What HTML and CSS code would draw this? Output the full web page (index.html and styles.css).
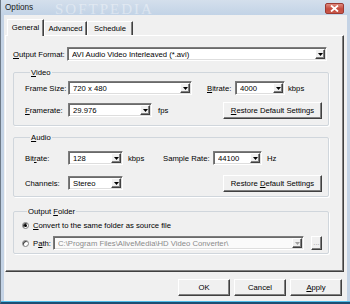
FILE: index.html
```html
<!DOCTYPE html>
<html lang="en">
<head>
    <meta charset="UTF-8">
    <title>Options</title>
    <link rel="stylesheet" href="styles.css">
</head>
<body>
    <div class="window">
        <!-- Title Bar -->
        <div class="titlebar">
            <span class="title">Options</span>
            <span class="watermark">SOFTPEDIA</span>
            <span class="close">
                <svg width="9" height="7" viewBox="0 0 9 7"><path d="M1 0.5L8 6.5M8 0.5L1 6.5" stroke="#fff" stroke-width="1.8"/></svg>
            </span>
        </div>

        <div class="client">
            <!-- Tabs -->
            <div class="tabs">
                <div class="tab tab-general active">General</div>
                <div class="tab tab-advanced">Advanced</div>
                <div class="tab tab-schedule">Schedule</div>
            </div>

            <div class="panel">
                <div class="row format-row">
                    <span class="label label-format"><u>O</u>utput Format:</span>
                    <div class="combo combo-format"><span class="value">AVI Audio Video Interleaved (*.avi)</span><span class="drop"><svg width="5" height="3"><path d="M0 0h5L2.5 3z"/></svg></span></div>
                </div>

                <!-- Video -->
                <fieldset class="group group-video">
                    <legend><u>V</u>ideo</legend>
                    <div class="row">
                        <span class="label">Frame Size:</span>
                        <div class="combo combo-size"><span class="value">720 x 480</span><span class="drop"><svg width="5" height="3"><path d="M0 0h5L2.5 3z"/></svg></span></div>
                        <span class="label-inline label-vbitrate"><u>B</u>itrate:</span>
                        <div class="combo combo-vbitrate"><span class="value">4000</span><span class="drop"><svg width="5" height="3"><path d="M0 0h5L2.5 3z"/></svg></span></div>
                        <span class="unit">kbps</span>
                    </div>
                    <div class="row row-tall row-framerate">
                        <span class="label"><u>F</u>ramerate:</span>
                        <div class="combo combo-rate"><span class="value">29.976</span><span class="drop"><svg width="5" height="3"><path d="M0 0h5L2.5 3z"/></svg></span></div>
                        <span class="unit unit-fps">fps</span>
                        <span class="btn btn-restore"><span><u>R</u>estore Default Settings</span></span>
                    </div>
                </fieldset>

                <!-- Audio -->
                <fieldset class="group group-audio">
                    <legend><u>A</u>udio</legend>
                    <div class="row">
                        <span class="label">Bit<u>r</u>ate:</span>
                        <div class="combo combo-abitrate"><span class="value">128</span><span class="drop"><svg width="5" height="3"><path d="M0 0h5L2.5 3z"/></svg></span></div>
                        <span class="unit unit-kbps">kbps</span>
                        <span class="label-inline label-sample">Sample Rate:</span>
                        <div class="combo combo-sample"><span class="value">44100</span><span class="drop"><svg width="5" height="3"><path d="M0 0h5L2.5 3z"/></svg></span></div>
                        <span class="unit unit-hz">Hz</span>
                    </div>
                    <div class="row row-tall row-channels">
                        <span class="label">Channels:</span>
                        <div class="combo combo-channels"><span class="value">Stereo</span><span class="drop"><svg width="5" height="3"><path d="M0 0h5L2.5 3z"/></svg></span></div>
                        <span class="btn btn-restore"><span>Restore <u>D</u>efault Settings</span></span>
                    </div>
                </fieldset>

                <!-- Output Folder -->
                <fieldset class="group group-output">
                    <legend>Output <u>F</u>older</legend>
                    <div class="row row-radio">
                        <span class="radio checked"></span>
                        <span><u>C</u>onvert to the same folder as source file</span>
                    </div>
                    <div class="row row-path">
                        <span class="radio"></span>
                        <span class="label-path">P<u>a</u>th:</span>
                        <div class="combo combo-path disabled"><span class="value">C:\Program Files\AliveMedia\HD Video Converter\</span><span class="drop"><svg width="5" height="3"><path d="M0 0h5L2.5 3z"/></svg></span></div>
                        <span class="btn btn-browse disabled">...</span>
                    </div>
                </fieldset>
            </div>

            <!-- Dialog Buttons -->
            <div class="actions">
                <span class="btn btn-action">OK</span>
                <span class="btn btn-action">Cancel</span>
                <span class="btn btn-action"><span><u>A</u>pply</span></span>
            </div>
        </div>
    </div>
</body>
</html>
```

FILE: styles.css
```css
:root {
    --color-face: #f0f0f0;
    --color-frame: #c4d3e5;
    --color-shadow: #808080;
    --color-dark: #404040;
    --color-group: #d0d6dc;
    --color-text: #000;
}

* {
    box-sizing: border-box;
}

html, body {
    margin: 0;
    width: 350px;
    height: 304px;
    overflow: hidden;
}

body {
    font-family: "Liberation Sans", Arial, sans-serif;
    font-size: 7.7px;
    color: var(--color-text);
}

u {
    text-decoration-thickness: 1px;
    text-underline-offset: 1px;
}

/* Window Frame */
.window {
    width: 350px;
    height: 304px;
    display: flex;
    flex-direction: column;
    background: var(--color-frame);
    border-left: 1px solid #6f7b88;
    border-bottom: 2px solid #1d4e73;
    box-shadow: inset 0 -1px 0 #4fbde9;
    position: relative;
}

.titlebar {
    height: 15px;
    display: flex;
    align-items: center;
    padding: 0 4px 0 4px;
    background: linear-gradient(#d4dfec, #c2d3e6);
    position: relative;
}

.title {
    font-size: 8.2px;
    color: #1a1a1a;
    margin-top: -1px;
}

.watermark {
    position: absolute;
    left: 54px;
    top: 1px;
    font-family: "Liberation Serif", serif;
    font-size: 15px;
    line-height: 16px;
    letter-spacing: 2px;
    color: rgba(255, 255, 255, 0.4);
}

.close {
    margin-left: auto;
    margin-right: 2px;
    margin-top: 2px;
    width: 19px;
    height: 11px;
    border: 1px solid #9b3a33;
    border-radius: 2px;
    background: linear-gradient(#de8a7e, #c44a3d 55%, #c9584a);
    display: flex;
    align-items: center;
    justify-content: center;
}

.client {
    flex: 1;
    margin: 0 3px 1px 3px;
    background: var(--color-face);
    display: flex;
    flex-direction: column;
}

/* Tabs */
.tabs {
    height: 20px;
    display: flex;
    align-items: flex-end;
    padding-left: 3px;
}

.tab {
    height: 14px;
    line-height: 13px;
    text-align: center;
    border-top: 1px solid #fff;
    border-left: 1px solid #fff;
    border-right: 1px solid var(--color-dark);
    box-shadow: inset -1px 0 var(--color-shadow);
    background: var(--color-face);
}

.tab.active {
    height: 17px;
    margin-bottom: -1px;
    line-height: 15px;
    position: relative;
    z-index: 1;
}

.tab-general { width: 37px; }
.tab-advanced { width: 43px; }
.tab-schedule { width: 46px; }

.panel {
    height: 237px;
    margin: 0 3px 0 1px;
    padding: 11px 0 0 7px;
    background: var(--color-face);
    border-top: 1px solid #fff;
    border-left: 1px solid #fff;
    border-right: 1px solid var(--color-dark);
    border-bottom: 1px solid var(--color-dark);
    box-shadow: inset -1px -1px var(--color-shadow);
}

/* Rows */
.row {
    display: flex;
    align-items: center;
    height: 14px;
}

.row-tall {
    height: 18px;
}

.label {
    width: 43px;
    flex-shrink: 0;
}

.label-format {
    width: 54px;
}

.unit {
    margin-left: 3px;
}

/* Combo Boxes */
.combo {
    height: 14px;
    display: flex;
    align-items: center;
    background: #fff;
    border: 1px solid;
    border-color: #7c7c7c #fff #fff #7c7c7c;
    box-shadow: inset 1px 1px #6a6a6a, inset -1px -1px #dedede;
    padding: 0 1px 0 4px;
}

.combo .value {
    flex: 1;
    white-space: nowrap;
    overflow: hidden;
}

.drop {
    width: 10px;
    height: 10px;
    display: flex;
    align-items: center;
    justify-content: center;
    background: var(--color-face);
    border: 1px solid;
    border-color: #fff var(--color-dark) var(--color-dark) #fff;
    box-shadow: inset -1px -1px var(--color-shadow);
}

.combo-format { width: 260px; }
.combo-size { width: 124px; }
.combo-vbitrate { width: 50px; }
.combo-rate { width: 84px; }
.combo-abitrate { width: 55px; }
.combo-sample { width: 49px; }
.combo-channels { width: 55px; }
.combo-path { width: 251px; }

.combo.disabled {
    background: #fafafa;
    color: #8a8a8a;
}

.combo.disabled .drop svg {
    fill: #a0a0a0;
}

/* Buttons */
.btn {
    height: 17px;
    display: flex;
    align-items: center;
    justify-content: center;
    white-space: nowrap;
    background: var(--color-face);
    border: 1px solid;
    border-color: #fff var(--color-dark) var(--color-dark) #fff;
    box-shadow: inset -1px -1px var(--color-shadow);
}

.btn-restore {
    width: 99px;
    margin-left: auto;
}

.btn.disabled {
    color: #a0a0a0;
}

/* Group Boxes */
.group {
    width: 316px;
    margin: 0;
    padding: 0 6px 0 11px;
    border: 1px solid var(--color-group);
    border-radius: 2px;
    box-shadow: 1px 1px #fff;
}

.group legend {
    padding: 0 1px;
    margin-left: 5px;
    line-height: 9px;
}

.group-video {
    margin-top: 7px;
    padding-top: 4px;
    padding-bottom: 6px;
}

.group-video .row-framerate {
    margin-top: 6px;
}

.label-vbitrate {
    margin-left: 15px;
    width: 28px;
}

.unit-fps {
    margin-left: 6px;
}

.group-audio {
    margin-top: 7px;
    padding-top: 9px;
    padding-bottom: 4px;
}

.group-audio .row-channels {
    margin-top: 9px;
}

.unit-kbps {
    margin-left: 5px;
    width: 15px;
}

.label-sample {
    margin-left: 20px;
    width: 50px;
}

.unit-hz {
    margin-left: 5px;
}

.group-output {
    margin-top: 10px;
    padding: 4px 6px 3px 8px;
}

.row-radio {
    height: 10px;
}

.row-path {
    margin-top: 6px;
}

.radio {
    width: 7px;
    height: 7px;
    margin-right: 4px;
    border-radius: 50%;
    background: #fff;
    border: 1px solid #7f7f7f;
    box-shadow: inset 1px 1px #404040;
    display: flex;
    align-items: center;
    justify-content: center;
}

.radio.checked::after {
    content: "";
    width: 3px;
    height: 3px;
    border-radius: 50%;
    background: #000;
}

.label-path {
    width: 20px;
}

.btn-browse {
    width: 11px;
    height: 14px;
    margin-left: 7px;
    padding-bottom: 2px;
}

/* Dialog Actions */
.actions {
    display: flex;
    justify-content: flex-end;
    gap: 4px;
    margin-top: 7px;
    padding-right: 5px;
}

.btn-action {
    width: 52px;
}
```
